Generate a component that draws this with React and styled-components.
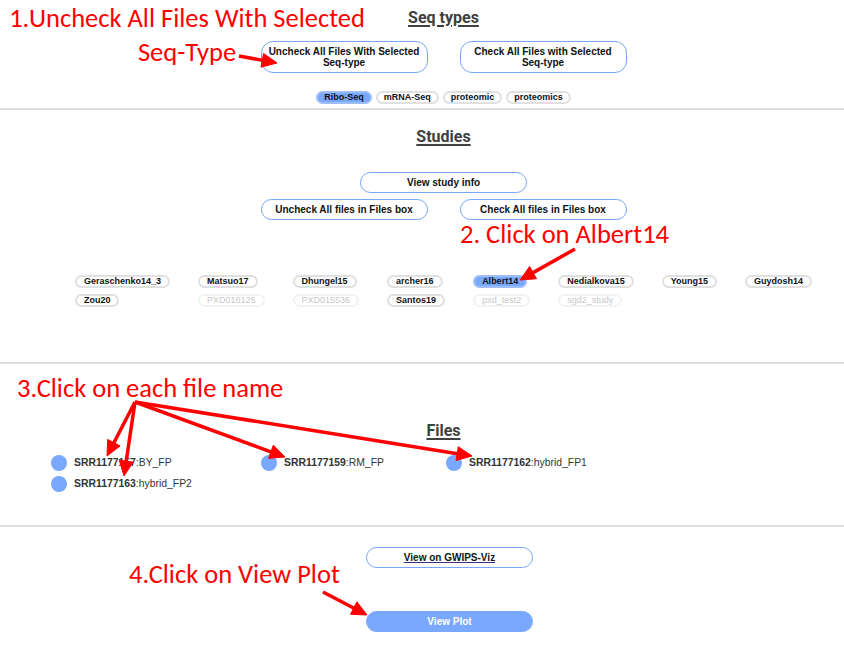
import React from "react"
import styled, { createGlobalStyle } from "styled-components"

const GlobalStyle = createGlobalStyle`
  body {
    margin: 0;
    background: #fff;
    font-family: "Liberation Sans", Arial, sans-serif;
  }
`

const Page = styled.div`
  position: relative;
  width: 844px;
  height: 654px;
  overflow: hidden;
`

const Section = styled.section`
  padding: ${props => props.$pad};
  border-bottom: ${props => (props.$last ? "none" : "2px solid #dedede")};
`

const Centered = styled.div`
  display: flex;
  flex-direction: column;
  align-items: center;
  padding-left: ${props => props.$shift ?? 43}px;
  margin-top: ${props => props.$top || 0}px;
`

const Heading = styled.h3`
  margin: 0;
  font-family: Roboto, "Liberation Sans", sans-serif;
  font-weight: 700;
  font-size: 16px;
  line-height: 20px;
  color: #404040;
  text-decoration: underline;
  text-decoration-thickness: 2px;
  text-underline-offset: 2px;
`

const ButtonRow = styled.div`
  display: flex;
  gap: ${props => props.$gap || 32}px;
  margin-top: ${props => props.$top || 0}px;
`

const Button = styled.button`
  width: 167px;
  height: ${props => (props.$tall ? 32 : 21)}px;
  padding: 0 4px;
  border: 1px solid #78a6f6;
  border-radius: ${props => (props.$tall ? 12 : 11)}px;
  background: ${props => (props.$primary ? "#7aa8ff" : "#fff")};
  color: ${props => (props.$primary ? "#fff" : "#111")};
  font-family: "Liberation Sans", Arial, sans-serif;
  font-weight: 700;
  font-size: 10px;
  line-height: 11px;
  cursor: pointer;

  ${props => props.$primary && "border-color: #7aa8ff;"}
`

const LinkText = styled.span`
  color: #141414;
  text-decoration: underline;
  text-decoration-color: #4a2a86;
`

const ChipRow = styled.div`
  display: flex;
  gap: 4px;
  margin-top: ${props => props.$top || 0}px;
`

const Chip = styled.span`
  display: inline-block;
  padding: 0 ${props => props.$pad ?? 6}px;
  border: 2px solid ${props => (props.$selected ? "#9dbdfb" : props.$disabled ? "#f3f3f3" : "#e0e0e0")};
  border-radius: 10px;
  background: ${props => (props.$selected ? "#7aa8ff" : "#fff")};
  color: ${props => (props.$disabled ? "#c9c9c9" : "#111")};
  font-weight: ${props => (props.$disabled ? 400 : 700)};
  font-size: 9px;
  line-height: 9px;
  white-space: nowrap;
`

const StudyGrid = styled.div`
  display: grid;
  grid-template-columns: repeat(8, auto);
  justify-content: center;
  justify-items: start;
  column-gap: 28px;
  row-gap: 6px;
  padding-left: 43px;
  margin-top: 55px;
`

const FileGrid = styled.div`
  display: grid;
  grid-template-columns: 210px 185px auto;
  grid-auto-rows: 21px;
  padding-left: 51px;
  margin-top: 11px;
`

const FileItem = styled.div`
  display: flex;
  align-items: center;
  gap: 7px;
  font-size: 10.4px;
  color: #333;
  cursor: pointer;
`

const Dot = styled.span`
  width: 16px;
  height: 16px;
  border-radius: 50%;
  background: #7aa8ff;
  flex: none;
`

const FileId = styled.b`
  font-weight: 700;
`

const Note = styled.div`
  position: absolute;
  left: ${props => props.$x}px;
  top: ${props => props.$y}px;
  width: ${props => (props.$w ? `${props.$w}px` : "auto")};
  font-family: Carlito, Lato, "Open Sans", sans-serif;
  font-size: 26.5px;
  line-height: ${props => props.$lh || 26.5}px;
  color: #ff0000;
  text-align: center;
  white-space: nowrap;
  pointer-events: none;
`

const Overlay = styled.svg`
  position: absolute;
  left: 0;
  top: 0;
  pointer-events: none;
`

const Arrow = ({ from, to }) => {
  const [x1, y1] = from
  const [x2, y2] = to
  const dx = x2 - x1
  const dy = y2 - y1
  const len = Math.hypot(dx, dy)
  const ux = dx / len
  const uy = dy / len
  const head = 15
  const half = 7
  const bx = x2 - ux * head
  const by = y2 - uy * head
  const pts = [
    [x2, y2],
    [bx - uy * half, by + ux * half],
    [bx + uy * half, by - ux * half],
  ]
  return (
    <g fill="#ff0000" stroke="#ff0000">
      <line x1={x1} y1={y1} x2={bx + ux * 2} y2={by + uy * 2} strokeWidth="3.5" />
      <polygon points={pts.map(p => p.join(",")).join(" ")} strokeWidth="1" strokeLinejoin="round" />
    </g>
  )
}

const seqTypes = [
  { name: "Ribo-Seq", selected: true },
  { name: "mRNA-Seq" },
  { name: "proteomic" },
  { name: "proteomics" },
]

const studies = [
  { name: "Geraschenko14_3" },
  { name: "Matsuo17" },
  { name: "Dhungel15" },
  { name: "archer16" },
  { name: "Albert14", selected: true },
  { name: "Nedialkova15" },
  { name: "Young15" },
  { name: "Guydosh14" },
  { name: "Zou20" },
  { name: "PXD016125", disabled: true },
  { name: "PXD015536", disabled: true },
  { name: "Santos19" },
  { name: "pxd_test2", disabled: true },
  { name: "sgd2_study", disabled: true },
]

const files = [
  { id: "SRR1177157", label: "BY_FP" },
  { id: "SRR1177159", label: "RM_FP" },
  { id: "SRR1177162", label: "hybrid_FP1" },
  { id: "SRR1177163", label: "hybrid_FP2" },
]

const arrows = [
  [[239, 56], [277, 63]],
  [[575, 249], [520, 280]],
  [[135, 402], [107, 456]],
  [[135, 402], [124, 476]],
  [[135, 402], [285, 457]],
  [[135, 402], [472, 456]],
  [[323, 592], [367, 615]],
]

const App = () => {
  return (
    <Page>
      <GlobalStyle />

      <Section $pad="8px 0 4px 0">
        <Centered>
          <Heading>Seq types</Heading>
        </Centered>
        <Centered $top={13}>
          <ButtonRow>
            <Button $tall>Uncheck All Files With Selected Seq-type</Button>
            <Button $tall>Check All Files with Selected Seq-type</Button>
          </ButtonRow>
        </Centered>
        <Centered $top={18}>
          <ChipRow>
            {seqTypes.map(s => (
              <Chip key={s.name} $selected={s.selected}>
                {s.name}
              </Chip>
            ))}
          </ChipRow>
        </Centered>
      </Section>

      <Section $pad="17px 0 55px 0">
        <Centered>
          <Heading>Studies</Heading>
        </Centered>
        <Centered $top={25}>
          <Button>View study info</Button>
          <ButtonRow $top={6}>
            <Button>Uncheck All files in Files box</Button>
            <Button>Check All files in Files box</Button>
          </ButtonRow>
        </Centered>
        <StudyGrid>
          {studies.map(s => (
            <Chip key={s.name} $pad={7} $selected={s.selected} $disabled={s.disabled}>
              {s.name}
            </Chip>
          ))}
        </StudyGrid>
      </Section>

      <Section $pad="57px 0 31px 0">
        <Centered>
          <Heading>Files</Heading>
        </Centered>
        <FileGrid>
          {files.map(f => (
            <FileItem key={f.id}>
              <Dot />
              <span>
                <FileId>{f.id}</FileId>:{f.label}
              </span>
            </FileItem>
          ))}
        </FileGrid>
      </Section>

      <Section $pad="20px 0 0 0" $last>
        <Centered $shift={55}>
          <Button>
            <LinkText>View on GWIPS-Viz</LinkText>
          </Button>
        </Centered>
        <Centered $shift={55} $top={43}>
          <Button $primary>View Plot</Button>
        </Centered>
      </Section>

      <Note $x={7} $y={1} $w={360} $lh={34}>
        1.Uncheck All Files With Selected
        <br />
        Seq-Type
      </Note>
      <Note $x={460} $y={221}>2. Click on Albert14</Note>
      <Note $x={17} $y={375}>3.Click on each file name</Note>
      <Note $x={129} $y={561}>4.Click on View Plot</Note>

      <Overlay width="844" height="654" viewBox="0 0 844 654">
        {arrows.map(([from, to], i) => (
          <Arrow key={i} from={from} to={to} />
        ))}
      </Overlay>
    </Page>
  )
}

export default App
